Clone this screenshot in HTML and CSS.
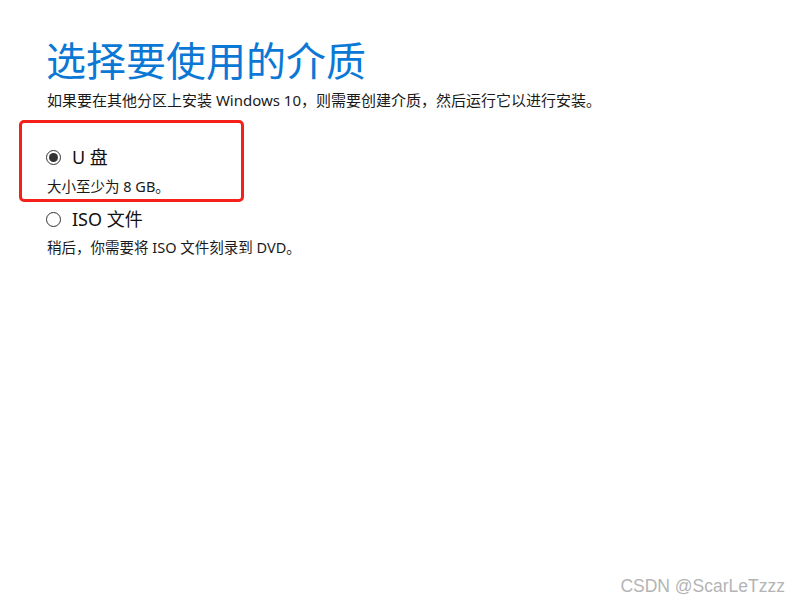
FILE: index.html
```html
<!DOCTYPE html>
<html lang="zh-CN">
<head>
  <meta charset="UTF-8">
  <title>选择要使用的介质</title>
  <link rel="stylesheet" href="styles.css">
</head>
<body>
  <div class="page">
    <h1 class="title">选择要使用的介质</h1>
    <p class="subtitle">如果要在其他分区上安装 Windows 10，则需要创建介质，然后运行它以进行安装。</p>

    <div class="options">
      <div class="option">
        <span class="radio checked"></span>
        <span class="option-label">U 盘</span>
      </div>
      <p class="option-desc first">大小至少为 8 GB。</p>

      <div class="option second">
        <span class="radio"></span>
        <span class="option-label">ISO 文件</span>
      </div>
      <p class="option-desc">稍后，你需要将 ISO 文件刻录到 DVD。</p>
    </div>
  </div>

  <div class="highlight"></div>
  <div class="watermark">CSDN @ScarLeTzzz</div>
</body>
</html>
```

FILE: styles.css
```css
body {
  margin: 0;
  background: #fff;
  color: #1a1a1a;
  font-family: "Segoe UI", "Noto Sans", "Noto Sans CJK SC", sans-serif;
  width: 800px;
  height: 603px;
  overflow: hidden;
  position: relative;
}
.page {
  padding: 36px 0 0 46px;
}
.title {
  font-size: 40px;
  line-height: 50px;
  font-weight: 400;
  color: #0b78d5;
  margin: 0;
}
.subtitle {
  font-size: 15px;
  line-height: 20px;
  margin: 4px 0 0 1px;
}
.options {
  margin-top: 35px;
}
.option {
  display: flex;
  align-items: center;
  gap: 11px;
  height: 24px;
}
.option.second {
  margin-top: 11px;
}
.radio {
  width: 13px;
  height: 13px;
  border: 1px solid #333;
  border-radius: 50%;
  display: flex;
  align-items: center;
  justify-content: center;
}
.radio.checked::after {
  content: "";
  width: 9px;
  height: 9px;
  border-radius: 50%;
  background: #333;
}
.option-label {
  font-size: 18px;
  line-height: 24px;
  color: #111;
}
.option-desc {
  font-size: 14.5px;
  line-height: 20px;
  margin: 6px 0 0 1px;
}
.option-desc.first {
  margin-top: 7px;
}
.highlight {
  position: absolute;
  left: 19px;
  top: 120px;
  width: 219px;
  height: 76px;
  border: 3px solid #f5201a;
  border-radius: 5px;
}
.watermark {
  position: absolute;
  right: 15px;
  bottom: 6px;
  font-family: "Liberation Sans", Arial, sans-serif;
  font-size: 17.5px;
  color: #b4b4b4;
}
```
